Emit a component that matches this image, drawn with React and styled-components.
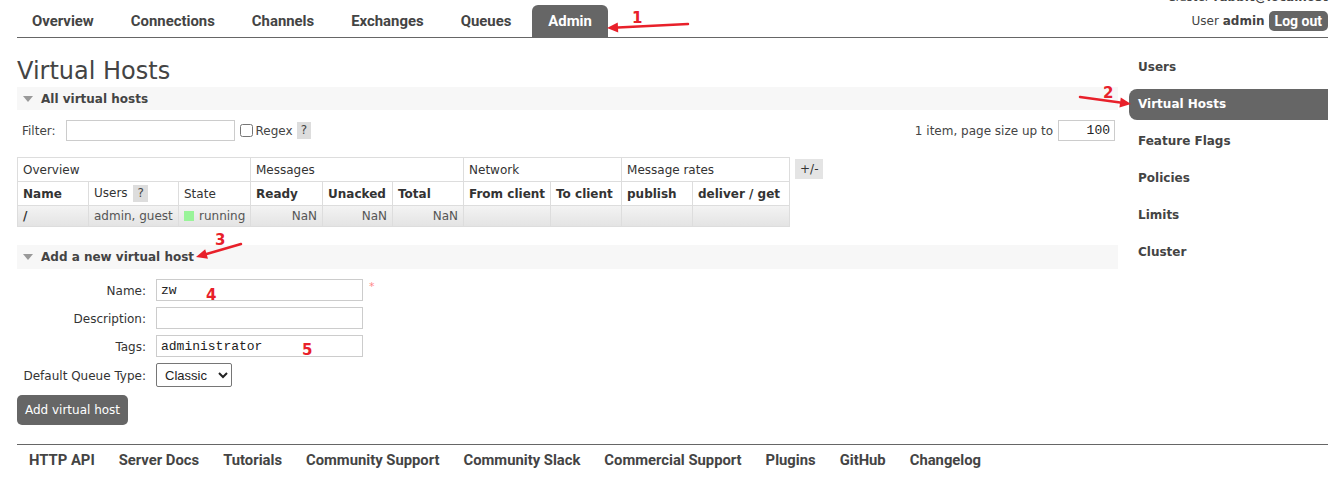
import React from 'react';
import styled, { createGlobalStyle } from 'styled-components';

const Global = createGlobalStyle`
  html, body { margin: 0; padding: 0; background: #fff; }
  body { font-family: "DejaVu Sans", Verdana, sans-serif; font-size: 12px; color: #444; }
  * { box-sizing: border-box; }
`;

const Page = styled.div`
  position: relative;
  width: 1342px;
  height: 477px;
  overflow: hidden;
  padding: 0 14px 0 17px;
`;

const Header = styled.header`
  display: flex;
  justify-content: space-between;
  align-items: flex-end;
  height: 38px;
  border-bottom: 1px solid #666;
`;

const Tabs = styled.nav`
  display: flex;
  gap: 5px;
  margin-left: -1px;
`;

const Tab = styled.a`
  display: block;
  height: 32px;
  line-height: 32px;
  padding: 0 16px;
  font-family: Roboto, "Noto Sans", sans-serif;
  font-weight: 700;
  font-size: 14.9px;
  color: ${p => (p.$active ? '#fff' : '#444')};
  background: ${p => (p.$active ? '#666' : 'transparent')};
  border-radius: 6px 6px 0 0;
`;

const UserBlock = styled.div`
  align-self: flex-start;
  margin-top: -10px;
  display: flex;
  flex-direction: column;
  align-items: flex-end;
`;

const ClusterLine = styled.div`
  height: 14px;
  line-height: 14px;
  b { font-weight: 700; }
`;

const UserLine = styled.div`
  margin-top: 7px;
  display: flex;
  align-items: center;
  gap: 4px;
  b { font-weight: 700; }
`;

const LogOut = styled.button`
  height: 20px;
  padding: 0 6px;
  border: none;
  border-radius: 5px;
  background: #666;
  color: #fff;
  font-family: Roboto, "Noto Sans", sans-serif;
  font-weight: 700;
  font-size: 14px;
  line-height: 20px;
`;

const Body = styled.div`
  display: flex;
  gap: 11px;
`;

const Main = styled.main`
  width: 1101px;
`;

const Title = styled.h1`
  margin: 19px 0 2px;
  font-size: 24px;
  line-height: 28px;
  font-weight: normal;
  color: #444;
`;

const SectionHead = styled.div`
  display: flex;
  align-items: center;
  gap: 8px;
  height: ${p => p.$h || 23}px;
  padding-left: 6px;
  background: #f7f7f7;
  font-weight: 700;
  font-size: 12px;
  color: #444;
  margin-top: ${p => p.$mt || 0}px;
`;

const Triangle = () => (
  <svg width="10" height="6" viewBox="0 0 10 6"><path d="M0 0 L10 0 L5 6 Z" fill="#999" /></svg>
);

const FilterRow = styled.div`
  display: flex;
  justify-content: space-between;
  align-items: center;
  height: 21px;
  margin-top: 10px;
  padding: 0 3px 0 5px;
`;

const Group = styled.div`
  display: flex;
  align-items: center;
`;

const TextInput = styled.input`
  width: ${p => p.$w}px;
  height: ${p => p.$h || 21}px;
  margin-left: ${p => p.$ml || 0}px;
  border: 1px solid #ccc;
  padding: 0 4px;
  font-family: "Liberation Mono", monospace;
  font-size: 13px;
  color: #222;
  text-align: ${p => (p.$right ? 'right' : 'left')};
  outline: none;
`;

const Check = styled.input`
  width: 13px;
  height: 13px;
  margin: 0 3px 0 5px;
`;

const Help = styled.span`
  display: inline-block;
  background: #ddd;
  padding: 0 4px;
  line-height: 17px;
  margin-left: ${p => p.$ml || 4}px;
  color: #444;
`;

const PageInfo = styled.span`
  font-size: 12px;
  margin-right: 5px;
`;

const TableRow = styled.div`
  display: flex;
  align-items: flex-start;
  margin-top: 16px;
`;

const Table = styled.table`
  border-collapse: collapse;
  table-layout: fixed;
  width: 772px;
  color: #333;
  th, td {
    border: 1px solid #ddd;
    padding: 0 5px;
    white-space: nowrap;
    text-align: left;
    font-size: 12px;
  }
`;

const GroupTh = styled.th`
  height: 24px;
  font-weight: normal;
`;

const ColTh = styled.th`
  height: 24px;
  font-weight: ${p => (p.$normal ? 'normal' : 700)};
`;

const DataRow = styled.tr`
  background: linear-gradient(#f3f3f3, #e3e3e3);
  td { height: 21px; color: #555; }
`;

const Td = styled.td`
  && { text-align: ${p => (p.$right ? 'right' : 'left')}; }
  font-weight: ${p => (p.$bold ? 700 : 'normal')};
  && { color: ${p => (p.$bold ? '#333' : '#555')}; }
`;

const Running = styled.span`
  display: inline-block;
  width: 10px;
  height: 10px;
  background: #99f499;
  margin-right: 5px;
  vertical-align: -1px;
`;

const PlusMinus = styled.span`
  margin: 2px 0 0 5px;
  background: #e4e4e4;
  padding: 0 5px;
  line-height: 20px;
  color: #333;
`;

const Form = styled.div`
  display: grid;
  grid-template-columns: 124px auto;
  column-gap: 10px;
  row-gap: 6px;
  align-items: center;
  margin-top: 10px;
  padding-left: 5px;
`;

const Label = styled.label`
  text-align: right;
  color: #333;
  padding-top: 2px;
`;

const Field = styled.div`
  display: flex;
  align-items: flex-start;
`;

const Star = styled.span`
  color: #f88;
  font-size: 11px;
  margin: 1px 0 0 6px;
`;

const Select = styled.select`
  width: 76px;
  height: 24px;
  font-family: "Liberation Sans", Arial, sans-serif;
  font-size: 13px;
  color: #222;
  border: 1px solid #767676;
  border-radius: 2px;
  background: #fff;
  padding-left: 4px;
`;

const Button = styled.button`
  margin-top: 8px;
  width: 111px;
  height: 30px;
  border: none;
  border-radius: 5px;
  background: #666;
  color: #fff;
  font-family: "DejaVu Sans", Verdana, sans-serif;
  font-size: 12px;
  padding: 0;
`;

const Side = styled.aside`
  width: 199px;
  padding-top: 14px;
  display: flex;
  flex-direction: column;
  gap: 6px;
`;

const SideItem = styled.a`
  display: block;
  height: 31px;
  line-height: 31px;
  padding-left: 9px;
  font-weight: 700;
  font-size: 12px;
  color: ${p => (p.$active ? '#fff' : '#444')};
  background: ${p => (p.$active ? '#666' : 'transparent')};
  border-radius: 8px 0 0 8px;
`;

const Footer = styled.footer`
  margin-top: 19px;
  border-top: 1px solid #666;
  display: flex;
  gap: 24px;
  padding-left: 12px;
  height: 31px;
  line-height: 30px;
  font-family: Roboto, "Noto Sans", sans-serif;
  font-weight: 700;
  font-size: 14.8px;
  color: #444;
`;

const Overlay = styled.svg`
  position: absolute;
  left: 0;
  top: 0;
  pointer-events: none;
  text {
    font-family: "DejaVu Sans", sans-serif;
    font-weight: 700;
    font-size: 15px;
    fill: #e8202a;
  }
`;

const Arrow = ({ x1, y1, x2, y2 }) => {
  const a = Math.atan2(y2 - y1, x2 - x1);
  const L = 11, W = 5;
  const bx = x2 - L * Math.cos(a), by = y2 - L * Math.sin(a);
  const px = -Math.sin(a) * W, py = Math.cos(a) * W;
  return (
    <g>
      <line x1={x1} y1={y1} x2={bx} y2={by} stroke="#e8202a" strokeWidth="2.5" strokeLinecap="round" />
      <polygon points={`${x2},${y2} ${bx + px},${by + py} ${bx - px},${by - py}`} fill="#e8202a" />
    </g>
  );
};

const navTabs = ['Overview', 'Connections', 'Channels', 'Exchanges', 'Queues', 'Admin'];
const sideItems = ['Users', 'Virtual Hosts', 'Feature Flags', 'Policies', 'Limits', 'Cluster'];
const footerLinks = ['HTTP API', 'Server Docs', 'Tutorials', 'Community Support', 'Community Slack', 'Commercial Support', 'Plugins', 'GitHub', 'Changelog'];

export default function App() {
  return (
    <Page>
      <Global />
      <Header>
        <Tabs>
          {navTabs.map(t => (
            <Tab key={t} $active={t === 'Admin'}>{t}</Tab>
          ))}
        </Tabs>
        <UserBlock>
          <ClusterLine>Cluster <b>rabbit@localhost</b></ClusterLine>
          <UserLine>
            <span>User <b>admin</b></span>
            <LogOut>Log out</LogOut>
          </UserLine>
        </UserBlock>
      </Header>

      <Body>
        <Main>
          <Title>Virtual Hosts</Title>
          <SectionHead><Triangle />All virtual hosts</SectionHead>
          <FilterRow>
            <Group>
              <span>Filter:</span>
              <TextInput $w={169} $ml={10} />
              <Check type="checkbox" />
              <span>Regex</span>
              <Help>?</Help>
            </Group>
            <Group>
              <PageInfo>1 item, page size up to</PageInfo>
              <TextInput $w={57} $right defaultValue="100" />
            </Group>
          </FilterRow>

          <TableRow>
            <Table>
              <colgroup>
                {[71, 90, 72, 72, 70, 71, 87, 71, 71, 97].map((w, i) => <col key={i} style={{ width: w }} />)}
              </colgroup>
              <thead>
                <tr>
                  <GroupTh colSpan={3}>Overview</GroupTh>
                  <GroupTh colSpan={3}>Messages</GroupTh>
                  <GroupTh colSpan={2}>Network</GroupTh>
                  <GroupTh colSpan={2}>Message rates</GroupTh>
                </tr>
                <tr>
                  <ColTh>Name</ColTh>
                  <ColTh $normal>Users <Help $ml={2}>?</Help></ColTh>
                  <ColTh $normal>State</ColTh>
                  <ColTh>Ready</ColTh>
                  <ColTh>Unacked</ColTh>
                  <ColTh>Total</ColTh>
                  <ColTh>From client</ColTh>
                  <ColTh>To client</ColTh>
                  <ColTh>publish</ColTh>
                  <ColTh>deliver / get</ColTh>
                </tr>
              </thead>
              <tbody>
                <DataRow>
                  <Td $bold>/</Td>
                  <Td>admin, guest</Td>
                  <Td><Running />running</Td>
                  <Td $right>NaN</Td>
                  <Td $right>NaN</Td>
                  <Td $right>NaN</Td>
                  <Td />
                  <Td />
                  <Td />
                  <Td />
                </DataRow>
              </tbody>
            </Table>
            <PlusMinus>+/-</PlusMinus>
          </TableRow>

          <SectionHead $h={24} $mt={18}><Triangle />Add a new virtual host</SectionHead>
          <Form>
            <Label>Name:</Label>
            <Field>
              <TextInput $w={207} $h={22} defaultValue="zw" />
              <Star>*</Star>
            </Field>
            <Label>Description:</Label>
            <Field><TextInput $w={207} $h={22} /></Field>
            <Label>Tags:</Label>
            <Field><TextInput $w={207} $h={22} defaultValue="administrator" /></Field>
            <Label>Default Queue Type:</Label>
            <Field>
              <Select defaultValue="classic">
                <option value="classic">Classic</option>
                <option value="quorum">Quorum</option>
                <option value="stream">Stream</option>
              </Select>
            </Field>
          </Form>
          <Button>Add virtual host</Button>
        </Main>

        <Side>
          {sideItems.map(s => (
            <SideItem key={s} $active={s === 'Virtual Hosts'}>{s}</SideItem>
          ))}
        </Side>
      </Body>

      <Footer>
        {footerLinks.map(l => <span key={l}>{l}</span>)}
      </Footer>

      <Overlay width="1342" height="477" viewBox="0 0 1342 477">
        <Arrow x1={688} y1={24} x2={607} y2={28} />
        <text x="632" y="23">1</text>
        <Arrow x1={1080} y1={97} x2={1131} y2={104} />
        <text x="1103" y="98">2</text>
        <Arrow x1={241} y1={244} x2={196} y2={257} />
        <text x="215" y="245">3</text>
        <text x="206" y="300">4</text>
        <text x="302" y="355">5</text>
      </Overlay>
    </Page>
  );
}
